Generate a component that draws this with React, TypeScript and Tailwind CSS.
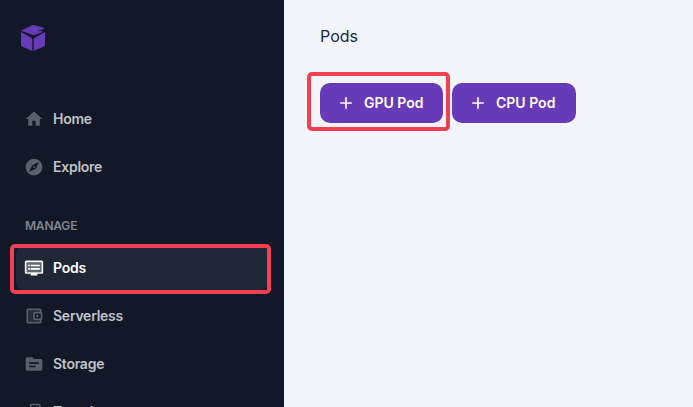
import type { ReactNode } from "react";

function Icon({ children }: { children: ReactNode }) {
  return (
    <svg viewBox="0 0 24 24" className="size-5 shrink-0 fill-current">
      {children}
    </svg>
  );
}

const HomeIcon = (
  <Icon>
    <path d="M10 20v-6h4v6h5v-8h3L12 3 2 12h3v8z" />
  </Icon>
);

const ExploreIcon = (
  <Icon>
    <path d="M12 10.9c-.61 0-1.1.49-1.1 1.1s.49 1.1 1.1 1.1c.61 0 1.1-.49 1.1-1.1s-.49-1.1-1.1-1.1zM12 2C6.48 2 2 6.48 2 12s4.48 10 10 10 10-4.48 10-10S17.52 2 12 2zm2.19 12.19L6 18l3.81-8.19L18 6l-3.81 8.19z" />
  </Icon>
);

const PodsIcon = (
  <Icon>
    <path opacity=".3" d="M3 5h18v12H3z" />
    <path d="M21 3H3c-1.1 0-2 .9-2 2v12c0 1.1.9 2 2 2h5v2h8v-2h5c1.1 0 1.99-.9 1.99-2L23 5c0-1.1-.9-2-2-2zm0 14H3V5h18v12zM19 8H8v2h11V8zm0 4H8v2h11v-2zM7 8H5v2h2V8zm0 4H5v2h2v-2z" />
  </Icon>
);

const WalletIcon = (
  <Icon>
    <path opacity=".3" d="M5 5h14v2h-6c-1.1 0-2 .9-2 2v6c0 1.1.9 2 2 2h6v2H5z" />
    <path d="M21 7.28V5c0-1.1-.9-2-2-2H5c-1.11 0-2 .9-2 2v14c0 1.1.89 2 2 2h14c1.1 0 2-.9 2-2v-2.28c.59-.35 1-.98 1-1.72V9c0-.74-.41-1.37-1-1.72zM20 9v6h-7V9h7zM5 19V5h14v2h-6c-1.1 0-2 .9-2 2v6c0 1.1.9 2 2 2h6v2H5z" />
    <circle cx="16" cy="12" r="1.5" />
  </Icon>
);

const StorageIcon = (
  <Icon>
    <path d="M20 6h-8l-2-2H4c-1.1 0-1.99.9-1.99 2L2 18c0 1.1.9 2 2 2h16c1.1 0 2-.9 2-2V8c0-1.1-.9-2-2-2zm-6 10H6v-2h8v2zm4-4H6v-2h12v2z" />
  </Icon>
);

const TemplatesIcon = (
  <Icon>
    <path d="M18 2H9c-1.1 0-2 .9-2 2v12c0 1.1.9 2 2 2h9c1.1 0 2-.9 2-2V4c0-1.1-.9-2-2-2zm0 14H9V4h9v12zM3 15v-2h2v2H3zm0-5.500h2v2H3v-2zM10 20h2v2h-2v-2z" />
  </Icon>
);

function NavItem({ icon, label, active = false }: { icon: ReactNode; label: string; active?: boolean }) {
  return (
    <a className={`flex h-11 items-center gap-[9px] rounded-lg pl-2 ${active ? "bg-[#1f2635] text-white" : "text-[#5b606d]"}`}>
      {icon}
      <span className={`text-sm leading-6 font-semibold tracking-[-0.25px] ${active ? "text-white" : "text-[#c0c3c8]"}`}>{label}</span>
    </a>
  );
}

function PodButton({ label, width }: { label: string; width: string }) {
  return (
    <button className={`flex h-10 items-center rounded-[10px] bg-[#673ab7] pl-4 text-sm font-semibold text-white ${width}`}>
      <svg viewBox="0 0 24 24" className="mr-2 size-5 fill-current">
        <path d="M19 13h-6v6h-2v-6H5v-2h6V5h2v6h6v2z" />
      </svg>
      {label}
    </button>
  );
}

export default function App() {
  return (
    <div className="flex h-[407px] w-[693px] overflow-hidden bg-[#f1f5fa] font-['Inter',sans-serif]">
      <aside className="w-71 shrink-0 overflow-hidden bg-[#121828] px-4">
        <svg viewBox="0 0 24 26" className="mt-[25px] ml-[5px] h-[26px] w-6 fill-[#673ab7]">
          <path d="M.8 5.200 11 .2q.8-.3 1.600-.1l10.200 2.700v1.200l-6.500 1.900 5 .2-.2 1.200-7.600 2.700q-1.200.4-2.300-.2L.8 6z" />
          <path d="M0 7 9.800 12.400q1.500.9 1.500 2.600V26L1.500 21.700Q0 21 0 19.500z" />
          <path d="M24 7 14.200 12.400q-1.500.9-1.500 2.600V26L22.500 21.700Q24 21 24 19.500z" />
        </svg>

        <nav className="mt-[46px] flex flex-col gap-1">
          <NavItem icon={HomeIcon} label="Home" />
          <NavItem icon={ExploreIcon} label="Explore" />
        </nav>

        <h2 className="mt-[27px] ml-[9px] text-xs leading-5 font-semibold tracking-[-0.2px] text-[#81858d]">MANAGE</h2>

        <nav className="mt-[10px] flex flex-col gap-1">
          <div className="relative">
            <NavItem icon={PodsIcon} label="Pods" active />
            <div className="absolute -top-[2px] -left-[6px] h-[50px] w-[261px] rounded-[5px] border-4 border-[#f43f53]" />
          </div>
          <NavItem icon={WalletIcon} label="Serverless" />
          <NavItem icon={StorageIcon} label="Storage" />
          <NavItem icon={TemplatesIcon} label="Templates" />
        </nav>
      </aside>

      <main className="px-9 pt-6">
        <h1 className="text-base leading-6 text-[#1a2740]">Pods</h1>
        <div className="mt-[35px] flex gap-[9px]">
          <div className="relative">
            <PodButton label="GPU Pod" width="w-[123px]" />
            <div className="absolute -top-[11px] -left-[13px] h-[59px] w-[143px] rounded-[5px] border-4 border-[#f43f53]" />
          </div>
          <PodButton label="CPU Pod" width="w-31" />
        </div>
      </main>
    </div>
  );
}
